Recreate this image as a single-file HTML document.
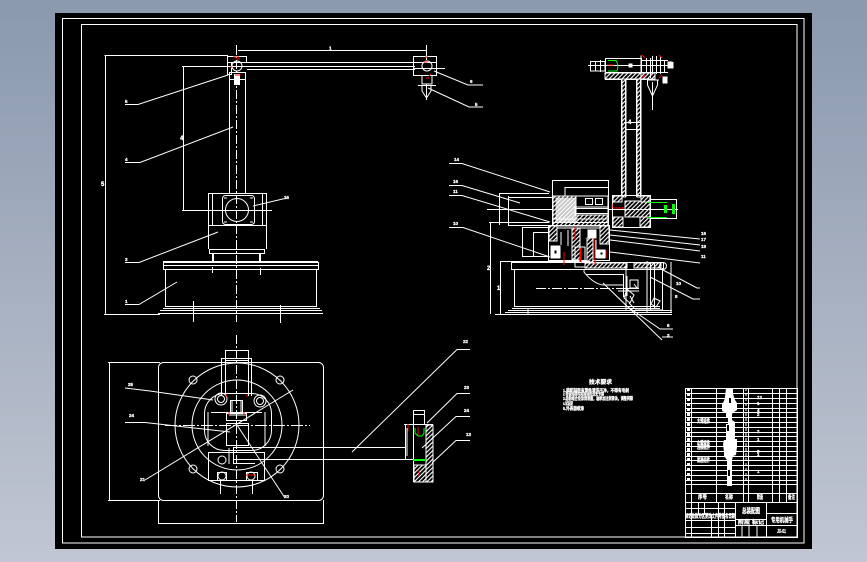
<!DOCTYPE html>
<html lang="zh"><head><meta charset="utf-8"><title>CAD</title>
<style>
html,body{margin:0;padding:0;width:867px;height:562px;overflow:hidden;background:linear-gradient(180deg,#8a99ae 0%,#c1c6d2 100%)}
svg{position:absolute;left:0;top:0;display:block}
text{font-family:"Liberation Sans","Noto Sans CJK SC",sans-serif;fill:#fff;font-weight:bold;stroke:#fff;stroke-width:.3}
</style></head><body>
<svg width="867" height="562" viewBox="0 0 867 562" xmlns="http://www.w3.org/2000/svg">
<defs>
<pattern id="h" width="3" height="3" patternUnits="userSpaceOnUse" patternTransform="rotate(45)"><rect width="3" height="3" fill="#000"/><rect width="1.1" height="3" fill="#fff"/></pattern>
</defs>
<rect x="55" y="13" width="757" height="536" fill="#000"/>
<g fill="none" stroke="#fff" stroke-width="1">
<rect x="62.500" y="18.500" width="741.500" height="524.500"/>
<rect x="81.500" y="24.500" width="715.500" height="512.500"/>

<!-- front view -->
<path d="M104.500 55.500H228M105.500 55V314M104 314.500H160M182 66.500H250M183.500 67V210M182 210.500H272"/>
<path d="M238 50.500H426M236.500 45V55M426.500 45V60"/>
<path d="M236.500 45V322" stroke-dasharray="9 2 2 2"/>
<path d="M240 62.500H415M240 66.500H415M247 69.500H415"/>
<rect x="227.500" y="56.500" width="19" height="6"/><rect x="227.500" y="62.500" width="4" height="12"/><rect x="229.500" y="72.500" width="16" height="7"/>
<circle cx="237" cy="66" r="5"/>
<rect x="234.500" y="74.500" width="5" height="10" fill="#fff"/>
<rect x="413.500" y="56.500" width="23" height="19"/><path d="M413 62.500H436M413 68.500H445"/><circle cx="427" cy="66" r="5"/>
<path d="M422 76V84H432V76M418 85.500H436M422 85V91L426.500 98L431 91V85M426.500 84V100"/>
<path d="M229.500 79V194M245.500 79V194"/>
<rect x="208.500" y="193.500" width="58" height="32"/>
<path d="M212.500 194V225M262.500 194V225M208.500 225V249M266.500 225V249"/>
<rect x="222.500" y="195.500" width="32" height="29" rx="3"/>
<circle cx="237" cy="210" r="11.500"/>
<path d="M203 210.500H272M224 198h3M250 198h3M224 222h3M250 222h3" />
<rect x="209.500" y="249.500" width="55" height="4"/>
<path d="M212.500 254V262M213.500 254V262M259.500 254V262M260.500 254V262"/>
<rect x="163.500" y="262.500" width="155" height="7"/><path d="M163 265.500H318M163 261.500H318"/>
<path d="M165.500 270V306M316.500 270V306M165 306.500H317M163 308.500H320M160 310.500H322M158 313.500H323M212.500 267V273M260.500 268V275M193.500 301V322M280.500 305V323"/>
<path d="M125 104.500H138L228 75M125 162.500H140L233 127M125 262.500H139L218 232M125 304.500H139L177 282M253 206L287 198"/>
<path d="M434 71L468 85H483M428 88L469 107H483"/>

<!-- section view head -->
<rect x="605.500" y="58.500" width="36" height="14"/>
<path d="M590.500 61.500H605V71H590.500ZM595.500 61V71M600.500 60V72M588 65.500H672"/>
<rect x="605" y="73" width="50" height="6" fill="url(#h)"/>
<path d="M605 72.500H655M605 79.500H655M641 55.500V80M646.500 58V72M650.500 58V78M652.500 56V72M656.500 56V74M660.500 56V74M664.500 60V72M641 60.500H668M641 72.500H668M668 62.500H673V68H668M652.500 82V110M647 80H659M647.500 80V85L652.500 96L657.500 85V80"/>
<rect x="663" y="77" width="4" height="6" fill="#fff"/><rect x="668" y="62" width="4" height="6" fill="#fff"/><rect x="629" y="64" width="3" height="3" fill="#fff"/>
<rect x="622" y="79" width="3.500" height="118" fill="url(#h)"/><rect x="637" y="79" width="3.500" height="118" fill="url(#h)"/>
<path d="M621.500 79V197M626 79V197M636.500 79V197M641 79V197M624 122.500H640M625 129.500H640"/>

<!-- hub and green shaft -->
<rect x="612.500" y="195.500" width="38" height="32"/>
<rect x="625" y="201" width="25" height="16" fill="url(#h)"/><rect x="613" y="217" width="10" height="10" fill="url(#h)"/><rect x="640" y="217" width="10" height="10" fill="url(#h)"/>
<rect x="613" y="196" width="9" height="6" fill="url(#h)"/><rect x="641" y="196" width="9" height="6" fill="url(#h)"/>
<rect x="650.500" y="199.500" width="26" height="19"/>

<!-- motor housing -->
<path d="M499.500 193V225M499 193.500H549M508.500 196V225M508 197.500H552M508 225.500H552M487 209.500H678"/>
<path d="M552.500 180V225M608.500 180V225M552 180.500H609M565 187.500H608M565 187V198"/>
<rect x="553" y="196" width="55" height="30" fill="url(#h)"/>
<rect x="556" y="198" width="20" height="24" fill="#fff" opacity=".78"/>
<rect x="576" y="196" width="32" height="11" fill="#000"/>
<rect x="585.500" y="198.500" width="7" height="6"/><rect x="595.500" y="198.500" width="7" height="6"/>
<rect x="575" y="207" width="33" height="8" fill="#000"/><path d="M575 208.500H608M575 213.500H608M576 203V216"/>
<path d="M553 219H608M552 222.500H609M552 228H610"/>

<!-- gear housing -->
<rect x="548.500" y="225.500" width="61" height="35"/>
<rect x="549" y="226" width="8" height="15" fill="url(#h)"/><rect x="572" y="228" width="8" height="32" fill="url(#h)"/><rect x="587" y="238" width="6" height="24" fill="url(#h)"/><rect x="600" y="226" width="9" height="18" fill="url(#h)"/>
<rect x="551" y="246" width="9" height="12" fill="#fff"/><rect x="554" y="250" width="3" height="4" fill="#000"/>
<rect x="597" y="250" width="8" height="8" fill="#fff"/><rect x="600" y="252" width="3" height="3" fill="#000"/>
<rect x="588" y="230" width="8" height="8" fill="#fff"/>
<rect x="575" y="247" width="10" height="20"/>
<path d="M561 232V245M568 230V246M596 240V258"/>

<!-- base section -->
<rect x="511.500" y="262.500" width="152" height="7"/><path d="M500 261.500H590"/>
<rect x="585" y="263" width="42" height="5" fill="url(#h)"/><rect x="634" y="263" width="27" height="5" fill="url(#h)"/>
<path d="M514.500 270V306M514 306.500H660M512 308.500H660M508 310.500H672M505 312.500H672M528 308V314M495 314.500H672"/>
<path d="M490.500 222V314M500.500 262V314M489 222.500H549M522.500 227V256M533.500 232V256M522 227.500H549M533 232.500H549M522 256.500H549"/>
<path d="M536 288.500H625" stroke-dasharray="10 2 2 2"/>
<path d="M584 270V272C590 280 598 285 604 285H623M586 274.500H623M623.500 274V297M618 288.500H639M618 291H639M627 276V296"/>
<path d="M626 263V311M647 261V312M650.500 262V310M654.500 262V308M662.500 268V310M671 262V313M635 310H662"/>
<circle cx="663" cy="266" r="3.500"/>
<path d="M630 280h8v8h-8zM627 289l7 6-4 8-6-5zM654 298l6 3-4 6-5-3zM629 303l5 5M634 284l3 4M630 296l4 7"/>
<path d="M449 163.500H462L550 192M449 185.500H462L520 203M449 195.500H462L550 222M449 227.500H463L550 257"/>
<path d="M610 230L700 239M610 235L700 245M610 240L700 251M610 252L700 263M663 270L697 288H700M650 277L693 299H700M603 283L662 340M628 307L660 329H673M662 337H673"/>

<!-- plan view -->
<rect x="158.500" y="362.500" width="165" height="138" rx="5"/>
<path d="M108 362.500H160M108 500.500H160M109.500 362V500M158.500 500V524M323.500 500V524M158 523.500H323"/>
<circle cx="237" cy="425" r="62"/><circle cx="237" cy="425" r="45"/>
<rect x="204.500" y="393.500" width="67" height="57" rx="20"/>
<circle cx="193" cy="380" r="4"/><circle cx="280" cy="380" r="4"/><circle cx="193" cy="469" r="4"/><circle cx="280" cy="469" r="4"/>
<path d="M236.500 335V522" stroke-dasharray="9 2 2 2"/>
<path d="M165 425.500H310" stroke-dasharray="12 2 2 2"/>
<rect x="225.500" y="350.500" width="23" height="10"/>
<path d="M221.500 358.500H251.500M221.500 358V396M251.500 358V396M225.500 360V396M248.500 360V396"/>
<rect x="230.500" y="400.500" width="12" height="13"/><rect x="226.500" y="413.500" width="20" height="7"/>
<rect x="226.500" y="423.500" width="22" height="22"/>
<path d="M211 412.500H262M208 412V446M265 412V446M229 415H246M232 401V412M241 401V412"/>
<rect x="208.500" y="452.500" width="56" height="28"/>
<circle cx="221" cy="399" r="3.500"/><circle cx="260" cy="401" r="3.500"/><circle cx="221" cy="399" r="6"/><circle cx="260" cy="401" r="6"/>
<path d="M233.500 447V464M233 447.500H405M233 459.500H405M405.500 425V459M233 463.500H255M229 448V464"/>
<circle cx="222" cy="460" r="4"/><circle cx="222" cy="476" r="4"/><circle cx="251" cy="476" r="4"/><rect x="217.500" y="472.500" width="9" height="8"/><rect x="246.500" y="472.500" width="11" height="8"/>
<path d="M220.500 481V494M252.500 481V494"/>
<rect x="413.500" y="424.500" width="19" height="57"/>
<rect x="426" y="425" width="7" height="57" fill="url(#h)"/>
<rect x="414" y="465" width="12" height="17" fill="url(#h)"/>
<rect x="413.500" y="410.500" width="11" height="14"/><path d="M414 414.500H424M404 424.500H414M404 459.500H414M407 428V456"/>
<path d="M125 388L150 391L213 400M125 422.500H145L230 432M145 480L293 390M237 425L285 498"/>
<path d="M352 452L457 349.500H470M427 423L457 393.500H470M422 448L456 416.500H470M432 463L456 440.500H470"/>

<!-- title table -->
<rect x="685.500" y="388.500" width="112" height="149"/>
<path d="M685 393.500H797M685 398.500H797M685 403.500H797M685 408.500H797M685 412.500H797M685 417.500H797M685 422.500H797M685 427.500H797M685 432.500H797M685 436.500H797M685 441.500H797M685 446.500H797M685 451.500H797M685 456.500H797M685 460.500H797M685 465.500H797M685 470.500H797M685 475.500H797M685 480.500H797M685 484.500H797M685 493.500H797M685 502.500H797"/>
<path d="M691.500 388V502M716.500 388V502M743.500 388V502M748.500 388V502M772.500 388V502M779.500 388V502M786.500 388V502"/>
<path d="M735.500 502V537M766.500 502V537M766 513.500H797M766 525.500H797M685 508.500H735M685 514.500H735M685 520.500H735M685 527.500H735M685 533.500H735M735 519.500H766M735 525.500H766M691.500 502V537M698.500 502V514M704.500 502V514M711.500 514V537M718.500 502V537M724.500 502V537M742 525V537M749 525V537M757 525V537"/>
<path d="M688.500 388V482" stroke-width="3" stroke-dasharray="3 2"/>
<path d="M746 388V482" stroke-dasharray="3 2"/>
</g>

<!-- colored details -->
<g fill="none" stroke="#f00" stroke-width="1">
<path d="M233 57h6M236 59h4M235 75h6M642 55l3 3M659 55l3 3M642 78l3-3M659 78l3-3M607 65h7M575 227V240M564 252V265M580 248V262M581 248V262M595 238V265M606 250V258M612 204V208M613 208H624M623 207V209M230 67h2"/>
<path d="M425 57h3M424 62h3M431 74l-2 2M426 78h3"/>
<path d="M226 394v3M247 394v3M229 412v3M244 412v3M408 424V431M418 427V436M419 470V476M246 475h10"/>
</g>
<g fill="none" stroke="#0f0" stroke-width="1">
<path d="M608 60.500H616Q619 65 617 71H608"/>
<path d="M647 202.500H667M647 217.500H667"/>
<path d="M415 428V433L418 436H422L424 433V428"/>
</g>
<rect x="664" y="205" width="3" height="8" fill="#0f0"/><rect x="672" y="204" width="3" height="10" fill="#0f0"/>
<rect x="413" y="459" width="12" height="2" fill="#0f0"/>

<!-- illegible stacked column in parts list -->
<path d="M726 388h7v6h-0l2 6 2 3v7l-3 2-2 2v6l3 2v17h2l0 8 -1 8-3 1-1 4v26h-5v-26l-3-4v-4l-1-8 1-4h2v-16h2v-7h-2v-4l-4-2v-7l2-3 1-4z" fill="#fff"/>
<rect x="729" y="398" width="2" height="5" fill="#000"/><rect x="727" y="425" width="2" height="6" fill="#000"/><rect x="728" y="470" width="2" height="6" fill="#000"/>

<!-- blocks of CAD text -->
<g font-size="4.500">
<text x="125" y="103">5</text><text x="125" y="161">4</text><text x="125" y="261">3</text><text x="125" y="303">1</text>
<text x="284" y="199">15</text>
<text x="329" y="49.500">1</text>
<text x="470" y="83">6</text><text x="475" y="106">5</text>
<text x="454" y="161">14</text><text x="453" y="183">16</text><text x="453" y="193">11</text><text x="453" y="225">10</text>
<text x="701" y="235">16</text><text x="701" y="241">17</text><text x="701" y="248">18</text><text x="701" y="258">11</text>
<text x="676" y="285">10</text><text x="675" y="298">8</text><text x="667" y="327">6</text><text x="667" y="337">3</text>
<text x="128" y="386">25</text><text x="129" y="417">24</text>
<text x="140" y="481">21</text><text x="284" y="498">20</text>
<text x="463" y="343">22</text><text x="464" y="389">23</text><text x="464" y="412">24</text><text x="466" y="436">13</text>
<text x="757" y="399">12</text><text x="757" y="405">1</text><text x="757" y="412">4</text><text x="757" y="416">2</text><text x="757" y="433">2</text><text x="757" y="441">1</text><text x="757" y="453">8</text><text x="757" y="456">1</text><text x="757" y="473">1</text>
</g>
<g font-size="6">
<text x="101" y="186">5</text><text x="180" y="140">4</text>
<text x="628" y="124">4</text>
<text x="487" y="270">2</text><text x="497" y="290">1</text>
</g>
<text x="589" y="384" font-size="5.500" textLength="23" lengthAdjust="spacingAndGlyphs">技术要求</text>
<g font-size="4.600">
<text x="563" y="392" textLength="66" lengthAdjust="spacingAndGlyphs">1.装配前所有零件清洗干净，不得有毛刺</text>
<text x="563" y="395.500" textLength="41" lengthAdjust="spacingAndGlyphs">2.各运动部件应转动灵活无卡滞</text>
<text x="563" y="400" textLength="70" lengthAdjust="spacingAndGlyphs">3.齿轮啮合处涂润滑脂，轴承加注润滑油，调整间隙</text>
<text x="563" y="405" textLength="10" lengthAdjust="spacingAndGlyphs">4.试运转</text>
<text x="563" y="410" textLength="21" lengthAdjust="spacingAndGlyphs">5.外表面喷漆</text>
</g>
<g font-size="5.500">
<text x="698" y="499" textLength="9" lengthAdjust="spacingAndGlyphs">序号</text>
<text x="725" y="499" textLength="8" lengthAdjust="spacingAndGlyphs">名称</text>
<text x="757" y="499" textLength="6" lengthAdjust="spacingAndGlyphs">数量</text>
<text x="788" y="499" textLength="7" lengthAdjust="spacingAndGlyphs">备注</text>
<text x="697" y="423" textLength="13" lengthAdjust="spacingAndGlyphs">大臂组件</text>
<text x="697" y="445" textLength="13" lengthAdjust="spacingAndGlyphs">小臂组件</text>
<text x="697" y="449" textLength="13" lengthAdjust="spacingAndGlyphs">连接组件</text>
<text x="697" y="462" textLength="13" lengthAdjust="spacingAndGlyphs">底座组件</text>
<text x="742" y="513" font-size="7" textLength="18" lengthAdjust="spacingAndGlyphs">总装配图</text>
<text x="771" y="522" font-size="6.500" textLength="22" lengthAdjust="spacingAndGlyphs">专用机械手</text>
<text x="777" y="533" textLength="9" lengthAdjust="spacingAndGlyphs">JX-01</text>
<text x="685" y="518" textLength="50" lengthAdjust="spacingAndGlyphs">标记处数分区更改文件号签名日期</text>
<text x="738" y="524" textLength="12" lengthAdjust="spacingAndGlyphs">阶段</text>
<text x="752" y="524" textLength="12" lengthAdjust="spacingAndGlyphs">标记</text>
</g>
</svg>
</body></html>
